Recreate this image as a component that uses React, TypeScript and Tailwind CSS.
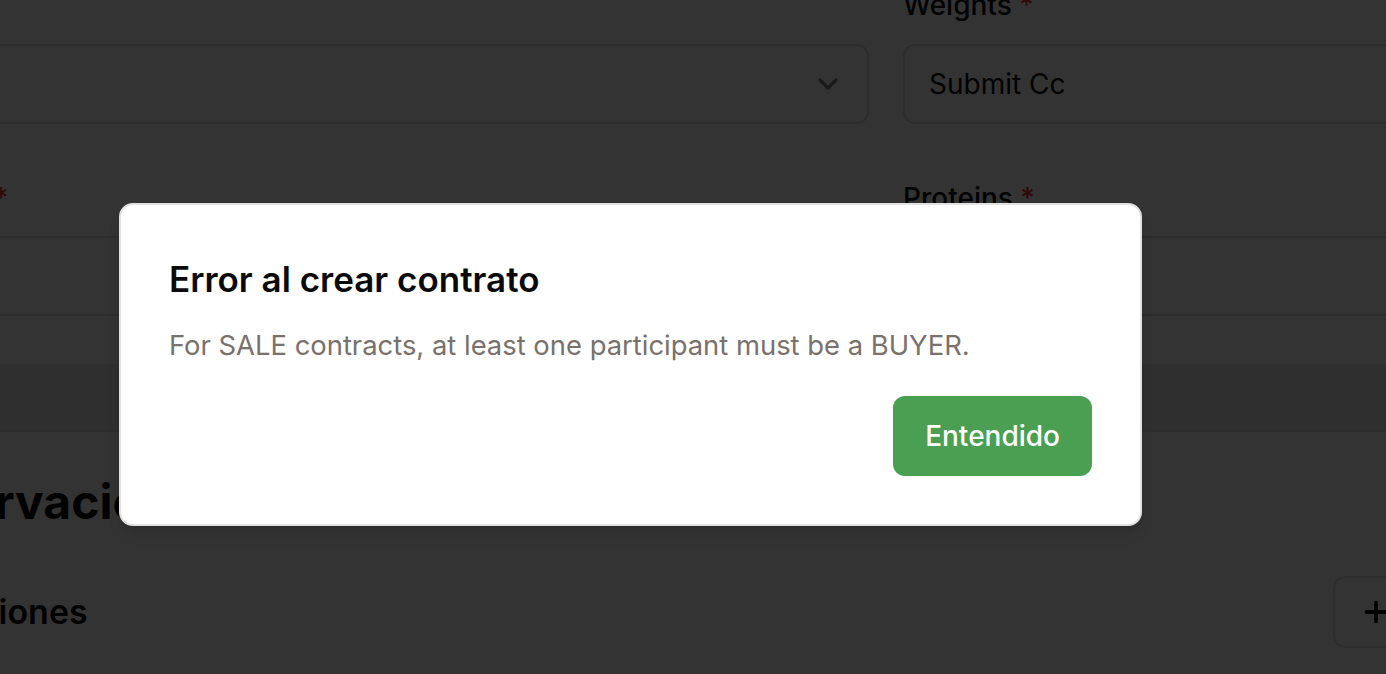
import { ChevronDown, Plus } from 'lucide-react'

function Label({ text }: { text: string }) {
  return (
    <label className="block h-[40px] text-[28px] leading-[40px] font-medium text-neutral-950">
      {text} <span className="text-red-500">*</span>
    </label>
  )
}

function FormPage() {
  return (
    <div className="ml-[-128px] mt-[-15px] w-[2028px]">
      <div className="grid grid-cols-2 gap-x-[34px]">
        <div>
          <Label text="Tipo" />
          <div className="mt-[19px] flex h-[80px] items-center justify-between rounded-[12px] border-2 border-[#e0e0e0] pl-[24px] pr-[23px] text-[28px] text-neutral-950">
            <span>Venta</span>
            <ChevronDown size={32} strokeWidth={2.6} className="text-neutral-950 opacity-50" />
          </div>
        </div>
        <div>
          <Label text="Weights" />
          <div className="mt-[19px] flex h-[80px] items-center rounded-[12px] border-2 border-[#e0e0e0] px-[24px] text-[28px] text-neutral-950">
            Submit Cc
          </div>
        </div>

        <div className="mt-[54px]">
          <div className="-ml-[6px]">
            <Label text="Cantidad" />
          </div>
          <div className="mt-[18px] h-[80px] rounded-[12px] border-2 border-[#e0e0e0]" />
        </div>
        <div className="mt-[54px]">
          <Label text="Proteins" />
          <div className="mt-[18px] h-[80px] rounded-[12px] border-2 border-[#e0e0e0]" />
        </div>
      </div>

      <div className="mt-[48px] h-[68px] border-b-2 border-[#dedede] bg-[#ebebeb]" />

      <h2 className="mt-[42px] text-[48px] leading-[56px] font-bold text-neutral-950">Observaciones</h2>

      <div className="mt-[46px] flex w-[1667px] items-start justify-between">
        <h3 className="ml-[10px] mt-[10px] text-[34px] leading-[52px] font-semibold text-neutral-950">Condiciones</h3>
        <button className="flex h-[72px] items-center gap-3 rounded-[12px] border-2 border-[#e0e0e0] px-[25px] text-[28px] font-medium text-neutral-950">
          <Plus size={32} strokeWidth={3} />
          Agregar
        </button>
      </div>
    </div>
  )
}

export default function App() {
  return (
    <div className="relative h-[674px] w-[1386px] overflow-hidden bg-white font-['Inter',sans-serif]">
      <FormPage />

      <div className="absolute inset-0 bg-black/80 pl-[119px] pt-[203px]">
        <div className="w-[1023px] rounded-[14px] border-2 border-[#e2e2e2] bg-white p-[48px] shadow-lg">
          <h2 className="text-[35px] leading-[52px] font-semibold text-neutral-950">Error al crear contrato</h2>
          <p className="mt-[20px] text-[27.4px] leading-[40px] text-[#78716c]">
            For SALE contracts, at least one participant must be a BUYER.
          </p>
          <div className="mt-[31px] flex justify-end">
            <button className="h-[80px] rounded-[12px] bg-[#4a9f53] px-[32px] text-[28px] font-medium text-white">
              Entendido
            </button>
          </div>
        </div>
      </div>
    </div>
  )
}
